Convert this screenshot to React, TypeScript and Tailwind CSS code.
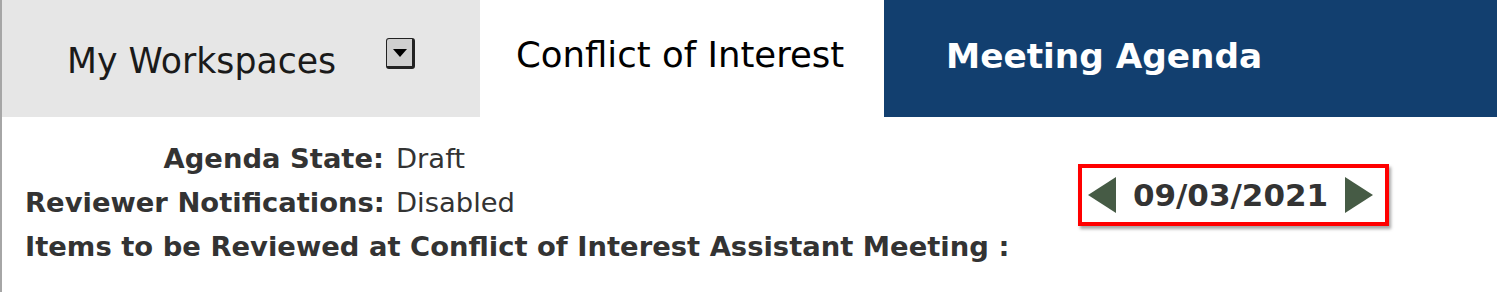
import React from "react"

function DropArrow() {
  return (
    <span className="inline-flex h-[31px] w-[29px] items-center justify-center rounded-[3px] border-r-[3px] border-b-[3px] border-l border-t border-[#222] bg-[#cfcfcf]">
      <svg width="16" height="10" viewBox="0 0 16 10">
        <polygon points="1,1 15,1 8,9" fill="#000" />
      </svg>
    </span>
  )
}

function Arrow({ dir }: { dir: "left" | "right" }) {
  return (
    <svg width="29" height="36" viewBox="0 0 29 36">
      {dir === "left" ? (
        <polygon points="28,0 28,36 0,18" fill="#465b45" />
      ) : (
        <polygon points="1,0 1,36 29,18" fill="#465b45" />
      )}
    </svg>
  )
}

export default function App() {
  return (
    <div className="h-[292px] w-[1497px] overflow-hidden border-l-2 border-[#a6a6a6] bg-white font-['DejaVu_Sans',Verdana,sans-serif]">
      {/* Tabs */}
      <div className="flex h-[117px]">
        <div className="flex w-[478px] items-start bg-[#e6e6e6] pt-[39px] pl-[65px]">
          <span className="text-[34.7px] leading-[44px] text-[#1a1a1a]">My Workspaces</span>
          <span className="ml-[50px] mt-[-1px]">
            <DropArrow />
          </span>
        </div>
        <div className="flex w-[404px] items-start bg-white pt-[33px] pl-[36px]">
          <span className="text-[35.5px] leading-[44px] text-black">Conflict of Interest</span>
        </div>
        <div className="flex flex-1 items-start bg-[#123f6f] pt-[34px] pl-[62px]">
          <span className="text-[34.3px] font-bold leading-[44px] text-white">Meeting Agenda</span>
        </div>
      </div>

      {/* Agenda info */}
      <div className="flex items-start justify-between pt-[20px] pl-[23px] pr-[108px]">
        <div className="whitespace-nowrap text-[27.4px] leading-[44px] text-[#333]">
          <div className="flex">
            <span className="w-[359px] shrink-0 text-right font-bold">Agenda State:</span>
            <span className="ml-[12px]">Draft</span>
          </div>
          <div className="flex">
            <span className="w-[359px] shrink-0 text-right font-bold">Reviewer Notifications:</span>
            <span className="ml-[12px]">Disabled</span>
          </div>
          <div className="font-bold">Items to be Reviewed at Conflict of Interest Assistant Meeting :</div>
        </div>
        <div className="mt-[27px] flex h-[62px] w-[311px] items-center justify-between border-[4px] border-[#ff0000] bg-white pl-[6px] pr-[12px] shadow-[2px_3px_3px_rgba(0,0,0,0.35)]">
          <Arrow dir="left" />
          <span className="text-[31px] font-bold text-[#333]">09/03/2021</span>
          <Arrow dir="right" />
        </div>
      </div>
    </div>
  )
}
